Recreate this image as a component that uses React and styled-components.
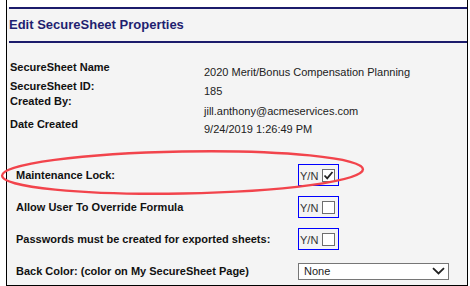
import React from 'react';
import styled, { createGlobalStyle } from 'styled-components';

const GlobalStyle = createGlobalStyle`
  html, body {
    margin: 0;
    padding: 0;
    background: #fff;
  }
  body {
    font-family: "Liberation Sans", Arial, sans-serif;
  }
`;

const Page = styled.div`
  position: relative;
  width: 470px;
  height: 286px;
  overflow: hidden;
`;

const Panel = styled.div`
  box-sizing: border-box;
  margin-left: 6px;
  width: 462px;
  height: 286px;
  padding-top: 7px;
  border: 1px solid #000;
  border-top: none;
  background: linear-gradient(#fff 0 7px, #f4f4f4 7px);
`;

const Header = styled.div`
  box-sizing: border-box;
  display: flex;
  align-items: center;
  height: 36px;
  margin-left: 2px;
  padding-bottom: 2px;
  border-top: 2px solid #1b1b6b;
  border-bottom: 2px solid #1b1b6b;
`;

const Title = styled.h1`
  margin: 0;
  font-size: 13px;
  font-weight: bold;
  color: #1f1f70;
`;

const Info = styled.div`
  display: flex;
  height: 93px;
`;

const LabelCol = styled.div`
  box-sizing: border-box;
  width: 197px;
  padding: 18px 0 0 3px;
  display: flex;
  flex-direction: column;
`;

const ValueCol = styled.div`
  padding-top: 23px;
  display: flex;
  flex-direction: column;
`;

const Label = styled.div`
  margin-top: ${props => props.gap || 0}px;
  font-size: 11px;
  line-height: 13px;
  font-weight: bold;
  color: #111;
`;

const Value = styled.div`
  margin-top: ${props => props.gap || 0}px;
  font-size: 11px;
  line-height: 13px;
  color: #222;
`;

const Options = styled.div`
  margin-top: 23px;
  padding-left: 9px;
  display: grid;
  grid-template-columns: 282px auto;
  grid-auto-rows: 32px;
  align-items: center;
`;

const OptionLabel = styled.div`
  font-size: 11px;
  font-weight: bold;
  color: #111;
`;

const YNBox = styled.div`
  box-sizing: border-box;
  display: flex;
  align-items: center;
  width: 41px;
  height: 22px;
  padding-left: 1px;
  border: 1px solid #0000ff;
`;

const YN = styled.span`
  width: 22px;
  padding-top: 3px;
  font-size: 11px;
  line-height: 13px;
  color: #333;
`;

const Check = styled.span`
  box-sizing: border-box;
  display: flex;
  width: 13px;
  height: 13px;
  border: 1px solid #6e6e6e;
  background: #fff;
`;

const Select = styled.div`
  box-sizing: border-box;
  display: flex;
  align-items: center;
  justify-content: space-between;
  width: 151px;
  height: 17px;
  padding: 0 3px 0 5px;
  border: 1px solid #767676;
  background: #fff;
  font-size: 11px;
  color: #222;
`;

const Ellipse = styled.svg`
  position: absolute;
  top: 0;
  left: 0;
  pointer-events: none;
`;

const info = [
  { label: 'SecureSheet Name', lgap: 0, value: '2020 Merit/Bonus Compensation Planning', vgap: 0 },
  { label: 'SecureSheet ID:', lgap: 6, value: '185', vgap: 6 },
  { label: 'Created By:', lgap: 2, value: 'jill.anthony@acmeservices.com', vgap: 7 },
  { label: 'Date Created', lgap: 10, value: '9/24/2019 1:26:49 PM', vgap: 5 },
];

const flags = [
  { label: 'Maintenance Lock:', checked: true },
  { label: 'Allow User To Override Formula', checked: false },
  { label: 'Passwords must be created for exported sheets:', checked: false },
];

function CheckBox({ checked }) {
  return (
    <Check>
      {checked && (
        <svg width="11" height="11" viewBox="0 0 11 11">
          <polyline points="1.5,5.5 4.2,8.3 9.5,2" fill="none" stroke="#222" strokeWidth="1.8" />
        </svg>
      )}
    </Check>
  );
}

export default function App() {
  return (
    <Page>
      <GlobalStyle />
      <Panel>
        <Header>
          <Title>Edit SecureSheet Properties</Title>
        </Header>
        <Info>
          <LabelCol>
            {info.map(row => <Label key={row.label} gap={row.lgap}>{row.label}</Label>)}
          </LabelCol>
          <ValueCol>
            {info.map(row => <Value key={row.label} gap={row.vgap}>{row.value}</Value>)}
          </ValueCol>
        </Info>
        <Options>
          {flags.map(flag => (
            <React.Fragment key={flag.label}>
              <OptionLabel>{flag.label}</OptionLabel>
              <YNBox>
                <YN>Y/N</YN>
                <CheckBox checked={flag.checked} />
              </YNBox>
            </React.Fragment>
          ))}
          <OptionLabel>Back Color: (color on My SecureSheet Page)</OptionLabel>
          <Select>
            <span>None</span>
            <svg width="13" height="8" viewBox="0 0 13 8">
              <polyline points="1,1.2 6.5,6.5 12,1.2" fill="none" stroke="#222" strokeWidth="1.8" />
            </svg>
          </Select>
        </Options>
      </Panel>
      <Ellipse width="470" height="286">
        <ellipse cx="182.5" cy="172.5" rx="180.5" ry="21" fill="none" stroke="#f2444c" strokeWidth="2.4" transform="rotate(-1 182.5 172.5)" />
      </Ellipse>
    </Page>
  );
}
